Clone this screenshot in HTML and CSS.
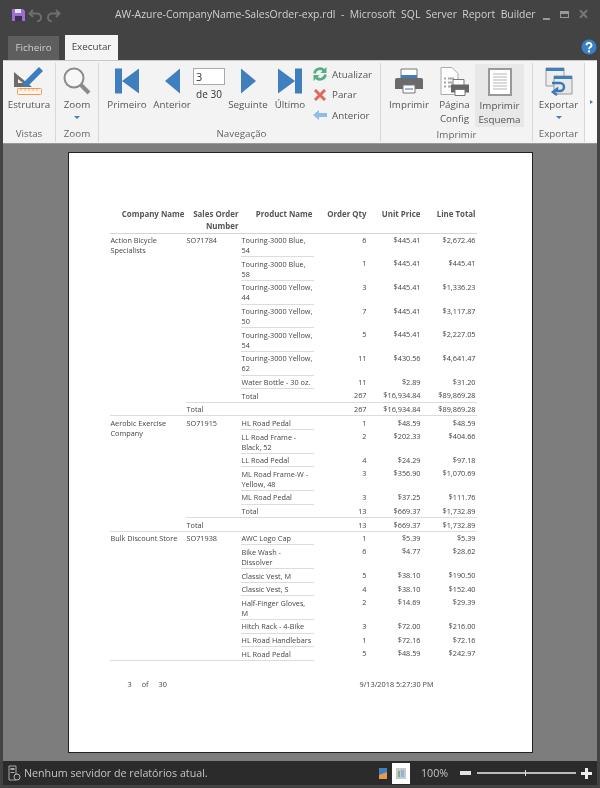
FILE: index.html
```html
<!DOCTYPE html>
<html lang="en">

<head>
    <meta charset="UTF-8">
    <title>AW-Azure-CompanyName-SalesOrder-exp.rdl - Microsoft SQL Server Report Builder</title>
    <link rel="stylesheet" href="styles.css">
</head>

<body>
    <div class="window">
        <div class="titlebar">
            <div class="quick">
                <svg width="13" height="14" viewBox="0 0 13 14"><path d="M0 1h11l2 2v10H0z" fill="#9a6fd0"/><path d="M3 1h6v4H3z" fill="#e8e0f2"/><path d="M3 8h7v5H3z" fill="#3d2f55"/></svg>
                <svg width="15" height="14" viewBox="0 0 15 14"><path d="M5 2 1.500 5.500 5 9M2 5.500h7a4 4 0 0 1 0 8" fill="none" stroke="#6e6e6e" stroke-width="2"/></svg>
                <svg width="15" height="14" viewBox="0 0 15 14"><path d="M10 2l3.500 3.500L10 9M13 5.500H6a4 4 0 0 0 0 8" fill="none" stroke="#6e6e6e" stroke-width="2"/></svg>
            </div>
            <div class="title">AW-Azure-CompanyName-SalesOrder-exp.rdl &nbsp;-&nbsp; Microsoft &nbsp;SQL &nbsp;Server &nbsp;Report &nbsp;Builder</div>
            <div class="controls">
                <span class="min"></span>
                <span class="max"></span>
                <svg width="9" height="8" viewBox="0 0 9 8"><path d="M1 0l7 8M8 0 1 8" stroke="#777" stroke-width="2"/></svg>
            </div>
        </div>

        <div class="tabs">
            <div class="tab">Ficheiro</div>
            <div class="tab active">Executar</div>
            <svg class="help" width="16" height="16" viewBox="0 0 16 16"><circle cx="8" cy="8" r="7.500" fill="#3a80c8"/><path d="M5.500 6.200a2.500 2.300 0 1 1 3.600 2.100C8.200 8.900 8 9.300 8 10.200" fill="none" stroke="#fff" stroke-width="1.800"/><circle cx="8" cy="12.400" r="1.100" fill="#fff"/></svg>
        </div>

        <div class="ribbon">
            <div class="group g-views">
                <div class="group-body">
                    <div class="btn">
                        <svg class="icon" width="32" height="30" viewBox="0 0 32 30"><path d="M1 6v15h18zM5 13v4h5z" fill="#6f6c68" fill-rule="evenodd"/><path d="M10 21l1-5L26 1l4 4-15 15z" fill="#3a7dc0"/><rect x="4.500" y="22.500" width="24" height="6" rx="1" fill="#fdf3e6" stroke="#ec9a52"/><path d="M8 23v2M12 23v2M16 23v2M20 23v2M24 23v2" stroke="#ec9a52" stroke-width=".8"/></svg>
                        <span>Estrutura</span>
                    </div>
                </div>
                <div class="group-label">Vistas</div>
            </div>
            <div class="group g-zoom">
                <div class="group-body">
                    <div class="btn">
                        <svg class="icon" width="30" height="30" viewBox="0 0 30 30"><circle cx="12" cy="12" r="9.500" fill="#f7f7f7" stroke="#8b8b8b" stroke-width="2"/><path d="M19 19l8 8" stroke="#8b8b8b" stroke-width="4"/></svg>
                        <span>Zoom</span>
                        <i class="caret"></i>
                    </div>
                </div>
                <div class="group-label">Zoom</div>
            </div>
            <div class="group g-nav">
                <div class="group-body">
                    <div class="btn nav-first">
                        <svg class="icon" width="24" height="25" viewBox="0 0 24 25"><path d="M0 0h7v25H0zM7 12.500 24 0v25z" fill="#3f7fbd"/></svg>
                        <span>Primeiro</span>
                    </div>
                    <div class="btn nav-prev">
                        <svg class="icon" width="15" height="25" viewBox="0 0 15 25"><path d="M15 0v25L0 12.500z" fill="#3f7fbd"/></svg>
                        <span>Anterior</span>
                    </div>
                    <div class="pager">
                        <div class="page-input">3</div>
                        <div class="page-of">de 30</div>
                    </div>
                    <div class="btn nav-next">
                        <svg class="icon" width="15" height="25" viewBox="0 0 15 25"><path d="M0 0v25l15-12.500z" fill="#3f7fbd"/></svg>
                        <span>Seguinte</span>
                    </div>
                    <div class="btn nav-last">
                        <svg class="icon" width="24" height="25" viewBox="0 0 24 25"><path d="M24 0h-7v25h7zM17 12.500 0 0v25z" fill="#3f7fbd"/></svg>
                        <span>Último</span>
                    </div>
                    <div class="stack">
                        <div class="stack-row">
                            <svg width="14" height="14" viewBox="0 0 14 14"><path d="M1.500 6.500A5.500 5.500 0 0 1 11 3.500" fill="none" stroke="#55ad80" stroke-width="2.600"/><path d="M13.500 0v6h-6z" fill="#55ad80"/><path d="M12.500 7.500A5.500 5.500 0 0 1 3 10.500" fill="none" stroke="#55ad80" stroke-width="2.600"/><path d="M.5 14V8h6z" fill="#55ad80"/></svg>
                            Atualizar
                        </div>
                        <div class="stack-row">
                            <svg width="14" height="14" viewBox="0 0 14 14"><path d="M2 2l10 10M12 2 2 12" stroke="#e0675a" stroke-width="3"/></svg>
                            Parar
                        </div>
                        <div class="stack-row">
                            <svg width="14" height="14" viewBox="0 0 14 14"><path d="M0 7l6-5v3h8v4H6v3z" fill="#8fbde6"/></svg>
                            Anterior
                        </div>
                    </div>
                </div>
                <div class="group-label">Navegação</div>
            </div>
            <div class="group g-print">
                <div class="group-body">
                    <div class="btn b-print">
                        <svg class="icon" width="28" height="26" viewBox="0 0 28 26"><path d="M6 1h16v9H6z" fill="#fff" stroke="#777"/><path d="M6 7h16v3H6z" fill="#3f7fbd"/><path d="M2 10h24a2 2 0 0 1 2 2v9H0v-9a2 2 0 0 1 2-2z" fill="#6a6a6a"/><path d="M8 17h12v8H8z" fill="#fff" stroke="#777"/><path d="M10 20h8v2h-8z" fill="#8fbde6"/></svg>
                        <span>Imprimir</span>
                    </div>
                    <div class="btn b-setup">
                        <svg class="icon" width="30" height="29" viewBox="0 0 30 29"><path d="M1 1h11l6 6v21H1z" fill="#fdfdfd" stroke="#aaa"/><path d="M4 11h2v2H4zM8 11h6v2H8zM4 15h2v2H4zM8 15h4v2H8zM4 19h2v2H4zM8 19h3v2H8z" fill="#aaa"/><path d="M13 13h11v6H13z" fill="#fff" stroke="#777"/><path d="M11 18h18v8H11z" fill="#666"/><path d="M15 23h10v6H15z" fill="#fff" stroke="#777"/></svg>
                        <span>Página<br>Config</span>
                    </div>
                    <div class="btn b-layout">
                        <svg class="icon" width="24" height="28" viewBox="0 0 24 28"><path d="M1 1h22v26H1z" fill="#fff" stroke="#999" stroke-width="2"/><path d="M5 6h14M5 9h14M5 12h14M5 15h14M5 18h14M5 21h14" stroke="#b5b5b5"/></svg>
                        <span>Imprimir<br>Esquema</span>
                    </div>
                </div>
                <div class="group-label">Imprimir</div>
            </div>
            <div class="group g-export">
                <div class="group-body">
                    <div class="btn">
                        <svg class="icon" width="28" height="28" viewBox="0 0 28 28"><path d="M1 1h18v18H1z" fill="#eee" stroke="#999"/><path d="M1 1h18v3H1z" fill="#3f7fbd"/><path d="M9 9h18v18H9z" fill="#e8e8e8" stroke="#999"/><path d="M9 9h18v3H9z" fill="#3f7fbd"/><path d="M7 16h8a4 4 0 0 1 0 8H12v-2l-4 3 4 3" fill="none" stroke="#3a78b8" stroke-width="2.500"/></svg>
                        <span>Exportar</span>
                        <i class="caret"></i>
                    </div>
                </div>
                <div class="group-label">Exportar</div>
            </div>
            <div class="ribbon-more"><i class="caret-right"></i></div>
        </div>

        <div class="viewer">
            <div class="page">
                <table class="report">
                    <colgroup>
                        <col class="c-company"><col class="c-order"><col class="c-product"><col class="c-qty"><col class="c-price"><col class="c-total">
                    </colgroup>
                    <thead>
                        <tr>
                            <th>Company Name</th>
                            <th>Sales Order Number</th>
                            <th>Product Name</th>
                            <th>Order Qty</th>
                            <th>Unit Price</th>
                            <th>Line Total</th>
                        </tr>
                    </thead>
                    <tbody>
                        <tr class="two">
                            <td class="left ruled" rowspan="9">Action Bicycle Specialists</td>
                            <td class="left ruled" rowspan="8">SO71784</td>
                            <td class="left ruled">Touring-3000 Blue, 54</td>
                            <td>6</td><td>$445.41</td><td>$2,672.46</td>
                        </tr>
                        <tr class="two"><td class="left ruled">Touring-3000 Blue, 58</td><td>1</td><td>$445.41</td><td>$445.41</td></tr>
                        <tr class="two"><td class="left ruled">Touring-3000 Yellow, 44</td><td>3</td><td>$445.41</td><td>$1,336.23</td></tr>
                        <tr class="two"><td class="left ruled">Touring-3000 Yellow, 50</td><td>7</td><td>$445.41</td><td>$3,117.87</td></tr>
                        <tr class="two"><td class="left ruled">Touring-3000 Yellow, 54</td><td>5</td><td>$445.41</td><td>$2,227.05</td></tr>
                        <tr class="two"><td class="left ruled">Touring-3000 Yellow, 62</td><td>11</td><td>$430.56</td><td>$4,641.47</td></tr>
                        <tr class="one"><td class="left ruled">Water Bottle - 30 oz.</td><td>11</td><td>$2.89</td><td>$31.20</td></tr>
                        <tr class="one sum"><td class="left">Total</td><td>267</td><td>$16,934.84</td><td>$89,869.28</td></tr>
                        <tr class="one sum"><td class="left" colspan="2">Total</td><td>267</td><td>$16,934.84</td><td>$89,869.28</td></tr>

                        <tr class="one">
                            <td class="left ruled" rowspan="7">Aerobic Exercise Company</td>
                            <td class="left ruled" rowspan="6">SO71915</td>
                            <td class="left ruled">HL Road Pedal</td>
                            <td>1</td><td>$48.59</td><td>$48.59</td>
                        </tr>
                        <tr class="two"><td class="left ruled">LL Road Frame - Black, 52</td><td>2</td><td>$202.33</td><td>$404.66</td></tr>
                        <tr class="one"><td class="left ruled">LL Road Pedal</td><td>4</td><td>$24.29</td><td>$97.18</td></tr>
                        <tr class="two"><td class="left ruled">ML Road Frame-W - Yellow, 48</td><td>3</td><td>$356.90</td><td>$1,070.69</td></tr>
                        <tr class="one"><td class="left ruled">ML Road Pedal</td><td>3</td><td>$37.25</td><td>$111.76</td></tr>
                        <tr class="one sum"><td class="left">Total</td><td>13</td><td>$669.37</td><td>$1,732.89</td></tr>
                        <tr class="one sum"><td class="left" colspan="2">Total</td><td>13</td><td>$669.37</td><td>$1,732.89</td></tr>

                        <tr class="one">
                            <td class="left ruled" rowspan="8">Bulk Discount Store</td>
                            <td class="left ruled" rowspan="8">SO71938</td>
                            <td class="left ruled">AWC Logo Cap</td>
                            <td>1</td><td>$5.39</td><td>$5.39</td>
                        </tr>
                        <tr class="two"><td class="left ruled">Bike Wash - Dissolver</td><td>6</td><td>$4.77</td><td>$28.62</td></tr>
                        <tr class="one"><td class="left ruled">Classic Vest, M</td><td>5</td><td>$38.10</td><td>$190.50</td></tr>
                        <tr class="one"><td class="left ruled">Classic Vest, S</td><td>4</td><td>$38.10</td><td>$152.40</td></tr>
                        <tr class="two"><td class="left ruled">Half-Finger Gloves, M</td><td>2</td><td>$14.69</td><td>$29.39</td></tr>
                        <tr class="one"><td class="left ruled">Hitch Rack - 4-Bike</td><td>3</td><td>$72.00</td><td>$216.00</td></tr>
                        <tr class="one"><td class="left ruled">HL Road Handlebars</td><td>1</td><td>$72.16</td><td>$72.16</td></tr>
                        <tr class="one"><td class="left ruled">HL Road Pedal</td><td>5</td><td>$48.59</td><td>$242.97</td></tr>
                    </tbody>
                </table>
                <div class="page-footer">
                    <div class="footer-pages"><span>3</span><span>of</span><span>30</span></div>
                    <div class="footer-date">9/13/2018 5:27:30 PM</div>
                </div>
            </div>
        </div>

        <div class="statusbar">
            <svg class="server" width="13" height="16" viewBox="0 0 13 16"><path d="M1 1h7v14H1z" fill="none" stroke="#aaa"/><path d="M2.500 3h4v2h-4zM2.500 7h4v1h-4z" fill="#aaa"/><circle cx="9" cy="12" r="3" fill="#2b2b2b" stroke="#bbb"/></svg>
            <div class="status-text">Nenhum servidor de relatórios atual.</div>
            <svg class="view-icon" width="10" height="11" viewBox="0 0 10 11"><path d="M1 0h8v11H1z" fill="#3f7fbd"/><path d="M1 7l8-3v7H1z" fill="#e89a4c"/></svg>
            <div class="view-active">
                <svg width="10" height="11" viewBox="0 0 10 11"><path d="M0 0h10v11H0z" fill="#c9c9c9"/><path d="M2 3h2v6H2z" fill="#7fb08f"/><path d="M5 2h3v7H5z" fill="#8fb5d8"/></svg>
            </div>
            <div class="zoom-value">100%</div>
            <span class="z-minus"></span>
            <div class="z-track"><span class="z-thumb"></span></div>
            <span class="z-plus"></span>
        </div>
    </div>
</body>

</html>
```

FILE: styles.css
```css
* {
    margin: 0;
    padding: 0;
    box-sizing: border-box;
}

body {
    width: 600px;
    height: 788px;
    overflow: hidden;
    font-family: 'Open Sans', 'Noto Sans', sans-serif;
    background: #434343;
}

.window {
    width: 600px;
    height: 788px;
    display: flex;
    flex-direction: column;
    background: #434343;
    padding: 0 3px 3px;
    filter: blur(0.35px);
}

/* title bar */
.titlebar {
    height: 35px;
    display: flex;
    align-items: center;
    flex-shrink: 0;
    padding-bottom: 7px;
}

.quick {
    display: flex;
    align-items: center;
    gap: 3px;
    width: 112px;
    padding-left: 9px;
    padding-top: 2px;
}

.title {
    font-size: 10.430px;
    color: #d0d0d0;
    white-space: nowrap;
    width: 393px;
    text-align: center;
}

.controls {
    display: flex;
    align-items: center;
    gap: 10px;
    margin-left: 35px;
}

.min {
    width: 7px;
    height: 2px;
    background: #999;
    margin-top: 9px;
}

.max {
    width: 9px;
    height: 7px;
    border: 1.5px solid #999;
    border-top-width: 3px;
}

/* tabs */
.tabs {
    height: 25px;
    display: flex;
    align-items: flex-end;
    position: relative;
    flex-shrink: 0;
    padding-left: 5px;
    gap: 6px;
}

.tab {
    width: 51px;
    height: 24px;
    background: #5e5e5e;
    color: #cfcfcf;
    font-size: 9.800px;
    text-align: center;
    line-height: 24px;
}

.tab.active {
    width: 53px;
    height: 25px;
    background: #f4f4f4;
    color: #444;
}

.help {
    position: absolute;
    right: 0;
    top: 4px;
}

/* ribbon */
.ribbon {
    height: 83px;
    flex-shrink: 0;
    display: flex;
    background: #f3f3f3;
    border-top: 1px solid #c8c8c8;
    color: #555;
}

.group {
    display: flex;
    flex-direction: column;
    border-right: 1px solid #d8d8d8;
    margin: 2px 0 1px;
}

.group-body {
    flex: 1;
    display: flex;
}

.group-label {
    height: 18px;
    line-height: 16px;
    font-size: 9.800px;
    text-align: center;
    color: #666;
}

.g-views { width: 53px; }
.g-zoom { width: 43px; }
.g-nav { width: 282px; }
.g-print { width: 152px; }
.g-export { width: 52px; }

.g-nav .group-label {
    padding-left: 4px;
}

.btn {
    display: flex;
    flex-direction: column;
    align-items: center;
    font-size: 9.800px;
    line-height: 14px;
    text-align: center;
    white-space: nowrap;
    height: 63px;
    flex: 1;
}

.btn .icon {
    height: 32px;
    margin-top: 2px;
    margin-bottom: 1px;
}

.caret {
    width: 0;
    height: 0;
    border: 3px solid transparent;
    border-top: 3px solid #3f7fbd;
    border-bottom: 0;
    margin-top: 4px;
}

.nav-first { flex: none; width: 46px; margin-left: 5px; }
.nav-prev { flex: none; width: 44px; }
.nav-next { flex: none; width: 42px; }
.nav-last { flex: none; width: 42px; }

.pager {
    width: 34px;
    flex: none;
    margin-left: -1px;
    padding-top: 5px;
    font-size: 10px;
    color: #333;
}

.page-input {
    width: 32px;
    height: 17px;
    background: #fff;
    border: 1px solid #aaa;
    line-height: 15px;
    padding-left: 2px;
    font-size: 11px;
}

.page-of {
    width: 32px;
    text-align: center;
    line-height: 14px;
    margin-top: 2px;
}

.stack {
    flex: none;
    padding-top: 1px;
    font-size: 9.800px;
    margin-left: 2px;
}

.stack-row {
    height: 20.500px;
    display: flex;
    align-items: center;
    gap: 5px;
    white-space: nowrap;
}

.b-print { flex: none; width: 50px; margin-left: 3px; }
.b-setup { flex: none; width: 41px; }
.b-layout {
    flex: none;
    width: 49px;
    background: #e8e8e8;
    height: 63px;
    margin-top: 1px;
}

.ribbon-more {
    flex: 1;
    margin: 0 0 1px;
    background: #f9f9f9;
    position: relative;
}

.caret-right {
    position: absolute;
    left: 5px;
    top: 39px;
    width: 0;
    height: 0;
    border: 2.500px solid transparent;
    border-left: 3px solid #3f7fbd;
    border-right: 0;
}

/* report viewer */
.viewer {
    flex: 1;
    background: #7d7d7d;
    border-top: 1px solid #999;
    padding-top: 8px;
    display: flex;
    justify-content: center;
    align-items: flex-start;
}

.page {
    width: 465px;
    height: 601px;
    background: #fff;
    border: 1px solid #222;
    padding: 54px 0 0 41px;
    color: #444;
}

.report {
    width: 367px;
    table-layout: fixed;
    border-collapse: collapse;
    font-size: 7.300px;
    line-height: 10px;
}

.c-company { width: 76px; }
.c-order { width: 55px; }
.c-product { width: 73px; }
.c-qty { width: 54px; }
.c-price { width: 54px; }
.c-total { width: 55px; }

.report th {
    font-weight: 700;
    font-size: 7.900px;
    line-height: 11.500px;
    text-align: right;
    vertical-align: top;
    height: 26px;
    padding: 2px 1px 0 0;
    border-bottom: 1px solid #d4d4d4;
    color: #555;
}

.report th:nth-child(2) {
    padding-right: 2px;
}

.report td {
    text-align: right;
    vertical-align: top;
    padding: 1.500px 1px 0 1px;
    overflow: hidden;
}

.report td.left {
    text-align: left;
}

.report td.ruled,
.sum td {
    border-bottom: 1px solid #dcdcdc;
}

.report tr.one {
    height: 13.600px;
}

.report tr.two {
    height: 23.700px;
}

.page-footer {
    display: flex;
    font-size: 7.300px;
    margin-top: 18px;
}

.footer-pages {
    display: flex;
    gap: 10px;
    margin-left: 18px;
    width: 232px;
}

/* status bar */
.statusbar {
    height: 24px;
    flex-shrink: 0;
    background: #2b2b2b;
    display: flex;
    align-items: center;
    color: #c4c4c4;
    padding-left: 5px;
}

.server {
    flex: none;
}

.status-text {
    font-size: 10.700px;
    margin-left: 3px;
    width: 353px;
    white-space: nowrap;
}

.view-icon {
    margin-left: 1px;
}

.view-active {
    width: 18px;
    height: 21px;
    background: #fff;
    margin-left: 4px;
    display: flex;
    align-items: center;
    justify-content: center;
}

.zoom-value {
    font-size: 10.700px;
    width: 39px;
    margin-left: 11px;
}

.z-minus {
    width: 11px;
    height: 4px;
    background: #e4e4e4;
}

.z-track {
    width: 99px;
    height: 2px;
    background: #bbb;
    margin: 0 5px 0 6px;
    position: relative;
}

.z-thumb {
    position: absolute;
    left: 48px;
    top: -2px;
    width: 1px;
    height: 6px;
    background: #ddd;
}

.z-plus {
    width: 11px;
    height: 11px;
    background:
        linear-gradient(#eee, #eee) center / 11px 3px no-repeat,
        linear-gradient(#eee, #eee) center / 3px 11px no-repeat;
}
```
